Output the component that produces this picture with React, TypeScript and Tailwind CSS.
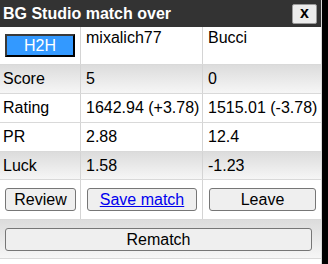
import React from "react";

const font = { fontFamily: '"Liberation Sans", Arial, sans-serif' };

function Btn({ children, className = "" }: { children: React.ReactNode; className?: string }) {
  return (
    <button
      className={
        "h-[23px] rounded-[3px] border border-[#767676] bg-[#efefef] text-[16px] leading-[18px] text-black flex items-center justify-center " +
        className
      }
    >
      {children}
    </button>
  );
}

export default function App() {
  const grad = "bg-gradient-to-b from-[#dcdcdc] to-[#f6f6f6]";
  const row = "grid grid-cols-[80px_122px_120px] border-b border-[#d9d9d9]";
  const c1 = "pl-[3px] flex items-center";
  const c2 = "pl-[5px] border-l border-[#d4d4d4] flex items-center";
  return (
    <div className="w-[328px] h-[264px] bg-black flex" style={font}>
      <div className="w-[322px] h-full bg-white border-r border-[#d8d8d8] flex flex-col text-[16px] leading-[18px] text-black">
        <div className="h-[27px] bg-[#333333] flex items-center justify-between pl-[3px] pr-[4px]">
          <span className="text-white font-bold text-[16px]">BG Studio match over</span>
          <button className="w-[25px] h-[20px] rounded-[2px] border border-[#9a9a9a] bg-[#ececec] flex items-center justify-center font-bold text-[16px] leading-none pb-[2px]">
            x
          </button>
        </div>
        <div className={row + " h-[38px]"}>
          <div className="pl-[5px] pt-[7px]">
            <button className="w-[70px] h-[23px] bg-[#3399ff] border-2 border-[#3a3a3a] border-b-black border-r-black text-white text-[16px] leading-[18px] flex items-center justify-center">
              H2H
            </button>
          </div>
          <div className="pl-[5px] pt-[2px] border-l border-[#d4d4d4]">mixalich77</div>
          <div className="pl-[5px] pt-[2px] border-l border-[#d4d4d4]">Bucci</div>
        </div>
        <div className={row + " h-[29px] " + grad}>
          <div className={c1}>Score</div>
          <div className={c2}>5</div>
          <div className={c2}>0</div>
        </div>
        <div className={row + " h-[29px]"}>
          <div className={c1}>Rating</div>
          <div className={c2 + " whitespace-nowrap"}>1642.94 (+3.78)</div>
          <div className={c2 + " whitespace-nowrap"}>1515.01 (-3.78)</div>
        </div>
        <div className={row + " h-[29px]"}>
          <div className={c1}>PR</div>
          <div className={c2}>2.88</div>
          <div className={c2}>12.4</div>
        </div>
        <div className={row + " h-[28px] " + grad}>
          <div className={c1}>Luck</div>
          <div className={c2}>1.58</div>
          <div className={c2}>-1.23</div>
        </div>
        <div className={row + " h-[40px]"}>
          <div className="pl-[5px] pt-[8px]">
            <Btn className="w-[71px]">Review</Btn>
          </div>
          <div className="pl-[6px] pt-[8px] border-l border-[#d4d4d4]">
            <Btn className="w-[110px]">
              <span className="text-[#0000ee] underline">Save match</span>
            </Btn>
          </div>
          <div className="pl-[6px] pt-[8px] border-l border-[#d4d4d4]">
            <Btn className="w-[107px]">Leave</Btn>
          </div>
        </div>
        <div className={"h-[39px] border-b border-[#d9d9d9] pl-[5px] pt-[8px] " + grad}>
          <Btn className="w-[307px]">Rematch</Btn>
        </div>
      </div>
    </div>
  );
}
